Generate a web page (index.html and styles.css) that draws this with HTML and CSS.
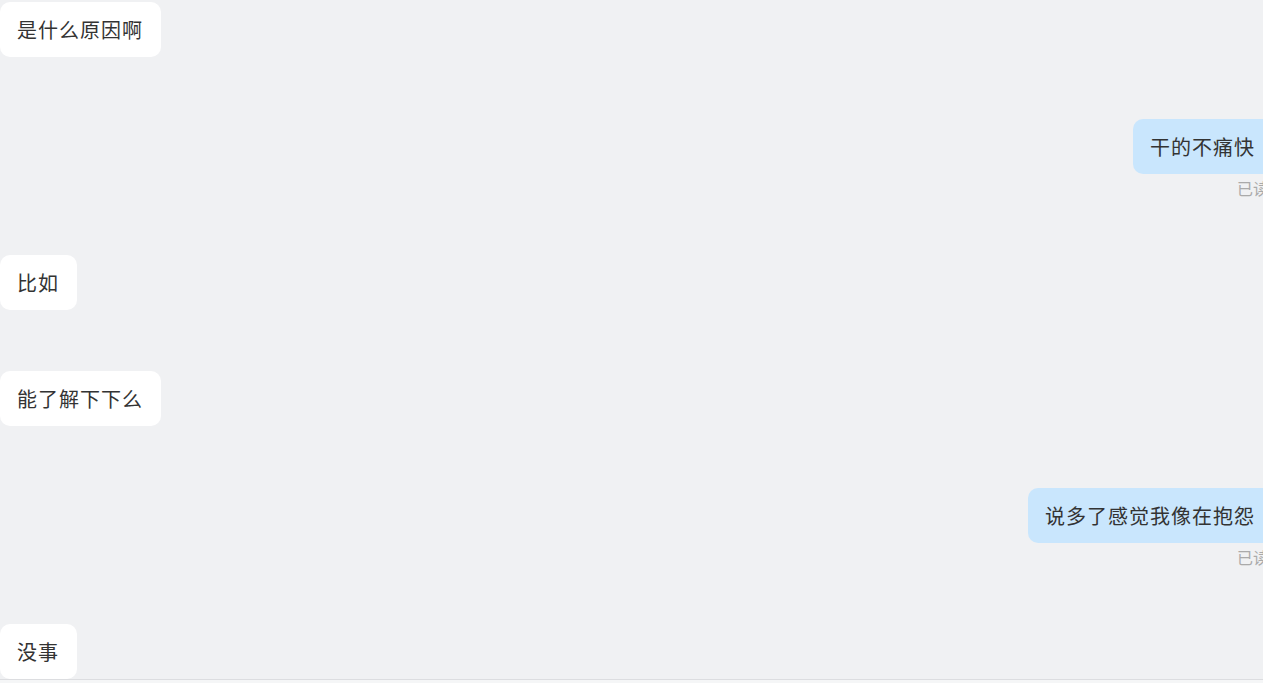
FILE: index.html
```html
<!DOCTYPE html>
<html lang="zh-CN">
  <head>
    <meta charset="UTF-8" />
    <title>聊天记录</title>
    <link rel="stylesheet" href="styles.css">
  </head>
  <body>
    <div class="chat">
      <div class="msg left">
        <div class="bubble">是什么原因啊</div>
      </div>
      <div class="msg right">
        <div class="bubble">干的不痛快</div>
        <div class="read">已读</div>
      </div>
      <div class="msg left">
        <div class="bubble">比如</div>
      </div>
      <div class="msg left">
        <div class="bubble">能了解下下么</div>
      </div>
      <div class="msg right">
        <div class="bubble">说多了感觉我像在抱怨</div>
        <div class="read">已读</div>
      </div>
      <div class="msg left">
        <div class="bubble">没事</div>
      </div>
    </div>
    <div class="footer"></div>
  </body>
</html>
```

FILE: styles.css
```css
html, body {
  margin: 0;
  padding: 0;
}
body {
  height: 683px;
  overflow: hidden;
  background-color: #f0f1f3;
  font-family: "Noto Sans CJK SC", "Liberation Sans", sans-serif;
  color: #333;
}
.chat {
  width: 1273px;
  height: 679px;
  overflow: hidden;
  padding-top: 2px;
  box-sizing: border-box;
  display: flex;
  flex-direction: column;
  gap: 61.5px;
}
.msg {
  display: flex;
  flex-direction: column;
}
.msg.left {
  align-items: flex-start;
}
.msg.right {
  align-items: flex-end;
}
.bubble {
  height: 55px;
  line-height: 55px;
  padding: 0 17px 0 17px;
  border-radius: 10px;
  background-color: #fff;
  font-size: 20px;
  letter-spacing: 1px;
  white-space: nowrap;
}
.left .bubble {
  padding-right: 18px;
}
.right .bubble {
  background-color: #c9e6fd;
  padding-right: 18px;
}
.read {
  height: 19.5px;
  line-height: 29px;
  font-size: 16px;
  color: #aaa;
  margin-right: 4px;
}
.footer {
  height: 4px;
  border-top: 1px solid #dcdde0;
  background-color: #f5f6f7;
}
```
